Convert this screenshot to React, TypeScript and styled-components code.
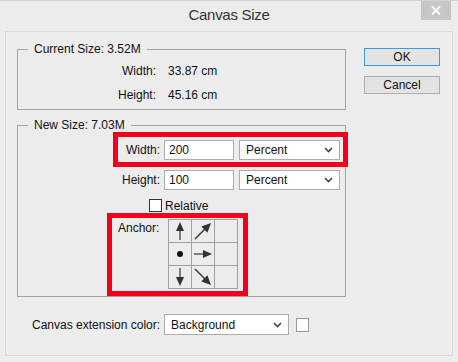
import styled, { createGlobalStyle } from "styled-components";

const GlobalStyle = createGlobalStyle`
  html, body {
    margin: 0;
    padding: 0;
    background: #ececec;
  }
  body {
    font-family: "Liberation Sans", Arial, sans-serif;
    font-size: 12px;
    color: #111;
  }
`;

const Window = styled.div`
  width: 458px;
  height: 362px;
  box-sizing: border-box;
  background: #ececec;
  border-top: 1px solid #d2d2d2;
  display: flex;
  flex-direction: column;
  overflow: hidden;
`;

const TitleBar = styled.div`
  height: 30px;
  display: grid;
  grid-template-columns: 1fr auto 1fr;
  align-items: start;
  padding-right: 7px;
  padding-left: 7px;
`;

const Title = styled.div`
  font-size: 15px;
  letter-spacing: -0.3px;
  color: #333;
  line-height: 28px;
`;

const CloseButton = styled.div`
  justify-self: end;
  width: 30px;
  height: 19px;
  background: #c7c7c7;
  display: flex;
  align-items: center;
  justify-content: center;
`;

const Panel = styled.div`
  margin-left: 5px;
  width: 448px;
  height: 325px;
  box-sizing: border-box;
  border: 1px solid #d9d9d9;
  padding: 17px 12px 0 11px;
  display: flex;
  flex-direction: column;
`;

const MainRow = styled.div`
  display: flex;
  gap: 18px;
  align-items: flex-start;
`;

const LeftColumn = styled.div`
  width: 329px;
  display: flex;
  flex-direction: column;
  gap: 15px;
`;

const GroupBox = styled.div<{ $height: number }>`
  position: relative;
  box-sizing: border-box;
  height: ${(p) => p.$height}px;
  border: 1px solid #a3a3a3;
`;

const Legend = styled.div`
  position: absolute;
  top: -8px;
  left: 10px;
  padding: 0 6px;
  background: #ececec;
  line-height: 14px;
`;

const InfoGrid = styled.div`
  display: grid;
  grid-template-columns: 138px auto;
  column-gap: 12px;
  padding-top: 9px;
  line-height: 24px;
`;

const InfoLabel = styled.div`
  text-align: right;
`;

const FieldColumn = styled.div`
  margin-left: 94px;
  padding-top: 11px;
  display: flex;
  flex-direction: column;
  align-items: flex-start;
`;

const FieldRow = styled.div<{ $highlight?: boolean }>`
  margin-left: 6px;
  margin-bottom: 5px;
  width: 225px;
  height: 25px;
  display: flex;
  align-items: center;
  outline: ${(p) => (p.$highlight ? "5px solid #f2001c" : "none")};
`;

const FieldLabel = styled.div`
  width: 42px;
  text-align: right;
  margin-right: 4px;
  white-space: nowrap;
`;

const TextInput = styled.div`
  box-sizing: border-box;
  width: 70px;
  height: 20px;
  background: #fff;
  border: 1px solid #acacac;
  padding-left: 4px;
  line-height: 18px;
  margin-right: 5px;
`;

const Select = styled.div<{ $width: number; $height?: number }>`
  box-sizing: border-box;
  width: ${(p) => p.$width}px;
  height: ${(p) => p.$height ?? 20}px;
  background: #fff;
  border: 1px solid #acacac;
  padding: 0 6px 0 6px;
  display: flex;
  align-items: center;
  justify-content: space-between;
`;

const CheckRow = styled.div`
  margin-top: 2px;
  margin-left: 37px;
  display: flex;
  align-items: center;
  gap: 3px;
  height: 13px;
`;

const Checkbox = styled.div`
  box-sizing: border-box;
  width: 13px;
  height: 13px;
  background: #fff;
  border: 1px solid #333;
`;

const AnchorBlock = styled.div`
  margin-top: 6px;
  width: 131px;
  height: 73px;
  box-sizing: border-box;
  padding: 1px 5px 2px 6px;
  display: flex;
  gap: 8px;
  outline: 5px solid #f2001c;
`;

const AnchorLabel = styled.div`
  width: 42px;
  padding-top: 2px;
  line-height: 14px;
`;

const AnchorGrid = styled.div`
  display: grid;
  grid-template-columns: repeat(3, 22px);
  grid-template-rows: repeat(3, 22px);
  gap: 1px;
  padding: 1px;
  background: #a0a0a0;
`;

const AnchorCell = styled.div`
  background: #ececec;
  display: flex;
  align-items: center;
  justify-content: center;
`;

const ButtonColumn = styled.div`
  margin-top: -1px;
  display: flex;
  flex-direction: column;
  gap: 10px;
`;

const DialogButton = styled.div<{ $primary?: boolean }>`
  box-sizing: border-box;
  width: 76px;
  height: 18px;
  border: 1px solid ${(p) => (p.$primary ? "#3d99e6" : "#adadad")};
  background: #e3e3e3;
  display: flex;
  align-items: center;
  justify-content: center;
  font-size: 12px;
`;

const ExtensionRow = styled.div`
  margin-top: 17px;
  padding-left: 15px;
  display: flex;
  align-items: center;
`;

const ExtensionLabel = styled.div`
  margin-right: 4px;
  white-space: nowrap;
`;

const Swatch = styled.div`
  margin-left: 7px;
  width: 13px;
  height: 14px;
  box-sizing: border-box;
  background: #fff;
  border: 1px solid #999;
`;

const Chevron = () => (
  <svg width="9" height="6" viewBox="0 0 9 6">
    <path d="M1 1 L4.5 4.5 L8 1" fill="none" stroke="#444" strokeWidth="1.6" />
  </svg>
);

type ArrowKind = "up" | "down" | "right" | "ne" | "se" | "dot" | "none";

const Arrow = ({ kind }: { kind: ArrowKind }) => {
  if (kind === "none") return null;
  return (
    <svg width="22" height="22" viewBox="0 0 22 22">
      {kind === "dot" && <circle cx="11" cy="11" r="3" fill="#111" />}
      {kind === "up" && (
        <>
          <line x1="11" y1="20" x2="11" y2="9" stroke="#333" strokeWidth="1.2" />
          <polygon points="11,2 7,11 15,11" fill="#333" />
        </>
      )}
      {kind === "down" && (
        <>
          <line x1="11" y1="2" x2="11" y2="13" stroke="#333" strokeWidth="1.2" />
          <polygon points="11,20 7,11 15,11" fill="#333" />
        </>
      )}
      {kind === "right" && (
        <>
          <line x1="2" y1="11" x2="13" y2="11" stroke="#333" strokeWidth="1.2" />
          <polygon points="20,11 11,7 11,15" fill="#333" />
        </>
      )}
      {kind === "ne" && (
        <>
          <line x1="3" y1="19" x2="13" y2="9" stroke="#333" strokeWidth="1.4" />
          <polygon points="19,3 15.4,12.7 9.3,6.6" fill="#333" />
        </>
      )}
      {kind === "se" && (
        <>
          <line x1="3" y1="3" x2="13" y2="13" stroke="#333" strokeWidth="1.4" />
          <polygon points="19,19 15.4,9.3 9.3,15.4" fill="#333" />
        </>
      )}
    </svg>
  );
};

const anchorCells: ArrowKind[] = ["up", "ne", "none", "dot", "right", "none", "down", "se", "none"];

export default function App() {
  return (
    <>
      <GlobalStyle />
      <Window>
        <TitleBar>
          <div />
          <Title>Canvas Size</Title>
          <CloseButton>
            <svg width="10" height="9" viewBox="0 0 10 9">
              <path d="M1 0.5 L9 8.5 M9 0.5 L1 8.5" stroke="#fff" strokeWidth="1.8" />
            </svg>
          </CloseButton>
        </TitleBar>
        <Panel>
          <MainRow>
            <LeftColumn>
              <GroupBox $height={61}>
                <Legend>Current Size: 3.52M</Legend>
                <InfoGrid>
                  <InfoLabel>Width:</InfoLabel>
                  <div>33.87 cm</div>
                  <InfoLabel>Height:</InfoLabel>
                  <div>45.16 cm</div>
                </InfoGrid>
              </GroupBox>
              <GroupBox $height={172}>
                <Legend>New Size: 7.03M</Legend>
                <FieldColumn>
                  <FieldRow $highlight>
                    <FieldLabel>Width:</FieldLabel>
                    <TextInput>200</TextInput>
                    <Select $width={101}>
                      Percent
                      <Chevron />
                    </Select>
                  </FieldRow>
                  <FieldRow>
                    <FieldLabel>Height:</FieldLabel>
                    <TextInput>100</TextInput>
                    <Select $width={101}>
                      Percent
                      <Chevron />
                    </Select>
                  </FieldRow>
                  <CheckRow>
                    <Checkbox />
                    Relative
                  </CheckRow>
                  <AnchorBlock>
                    <AnchorLabel>Anchor:</AnchorLabel>
                    <AnchorGrid>
                      {anchorCells.map((kind, i) => (
                        <AnchorCell key={i}>
                          <Arrow kind={kind} />
                        </AnchorCell>
                      ))}
                    </AnchorGrid>
                  </AnchorBlock>
                </FieldColumn>
              </GroupBox>
            </LeftColumn>
            <ButtonColumn>
              <DialogButton $primary>OK</DialogButton>
              <DialogButton>Cancel</DialogButton>
            </ButtonColumn>
          </MainRow>
          <ExtensionRow>
            <ExtensionLabel>Canvas extension color:</ExtensionLabel>
            <Select $width={125} $height={21}>
              Background
              <Chevron />
            </Select>
            <Swatch />
          </ExtensionRow>
        </Panel>
      </Window>
    </>
  );
}
